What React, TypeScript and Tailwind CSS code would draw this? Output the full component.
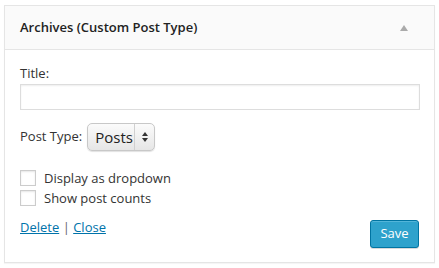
import React from "react";

export default function App() {
  return (
    <div className="w-[439px] h-[268px] bg-white pt-[5px] pl-[4px] font-['Open_Sans',sans-serif] text-[13px] text-[#444]">
      <div className="w-[431px] h-[258px] border border-[#e5e5e5] bg-white shadow-[0_1px_1px_rgba(0,0,0,0.04)] flex flex-col">
        {/* Header */}
        <div className="h-[44px] bg-[#fafafa] border-b border-[#e5e5e5] flex items-center justify-between pl-[15px] pr-[26px]">
          <h3 className="text-[13px] font-semibold text-[#222] leading-none">Archives (Custom Post Type)</h3>
          <span className="w-0 h-0 border-l-[4px] border-r-[4px] border-b-[6px] border-l-transparent border-r-transparent border-b-[#aaa]" />
        </div>

        {/* Body */}
        <div className="flex-1 px-[15px] pt-[14px] flex flex-col">
          <label className="leading-[18px] text-[#333]">Title:</label>
          <input
            type="text"
            className="mt-[2px] w-[400px] h-[26px] border border-[#ddd] bg-white shadow-[inset_0_1px_2px_rgba(0,0,0,0.07)] outline-none"
          />

          <div className="mt-[13px] flex items-center gap-[5px]">
            <span className="text-[#333]">Post Type:</span>
            <div className="h-[28px] w-[68px] rounded-[5px] border border-[#c8c8c8] bg-gradient-to-b from-[#fbfbfb] to-[#e6e6e6] shadow-[0_1px_1px_rgba(0,0,0,0.12)] flex items-center">
              <span className="flex-1 pl-[7px] text-[15px] text-[#222] leading-none">Posts</span>
              <div className="w-[20px] h-full border-l border-[#d0d0d0] flex flex-col items-center justify-center gap-[2px]">
                <span className="w-0 h-0 border-l-[3px] border-r-[3px] border-b-[4px] border-l-transparent border-r-transparent border-b-[#333]" />
                <span className="w-0 h-0 border-l-[3px] border-r-[3px] border-t-[4px] border-l-transparent border-r-transparent border-t-[#333]" />
              </div>
            </div>
          </div>

          <div className="mt-[19px] flex flex-col gap-[4px]">
            <label className="flex items-center gap-[8px] leading-[16px] text-[#333]">
              <span className="w-[16px] h-[16px] border border-[#ccc] bg-white shadow-[inset_0_1px_2px_rgba(0,0,0,0.1)]" />
              Display as dropdown
            </label>
            <label className="flex items-center gap-[8px] leading-[16px] text-[#333]">
              <span className="w-[16px] h-[16px] border border-[#ccc] bg-white shadow-[inset_0_1px_2px_rgba(0,0,0,0.1)]" />
              Show post counts
            </label>
          </div>

          <div className="mt-[12px] flex items-start justify-between">
            <div className="text-[#0073aa]">
              <a href="#" className="underline">Delete</a>
              <span className="text-[#666]"> | </span>
              <a href="#" className="underline">Close</a>
            </div>
            <button className="mt-[2px] h-[28px] w-[49px] rounded-[3px] bg-[#2ea2cc] border border-[#0074a2] text-white text-[13px] shadow-[inset_0_1px_0_rgba(120,200,230,0.5),0_1px_0_rgba(0,0,0,0.15)]">
              Save
            </button>
          </div>
        </div>
      </div>
    </div>
  );
}
